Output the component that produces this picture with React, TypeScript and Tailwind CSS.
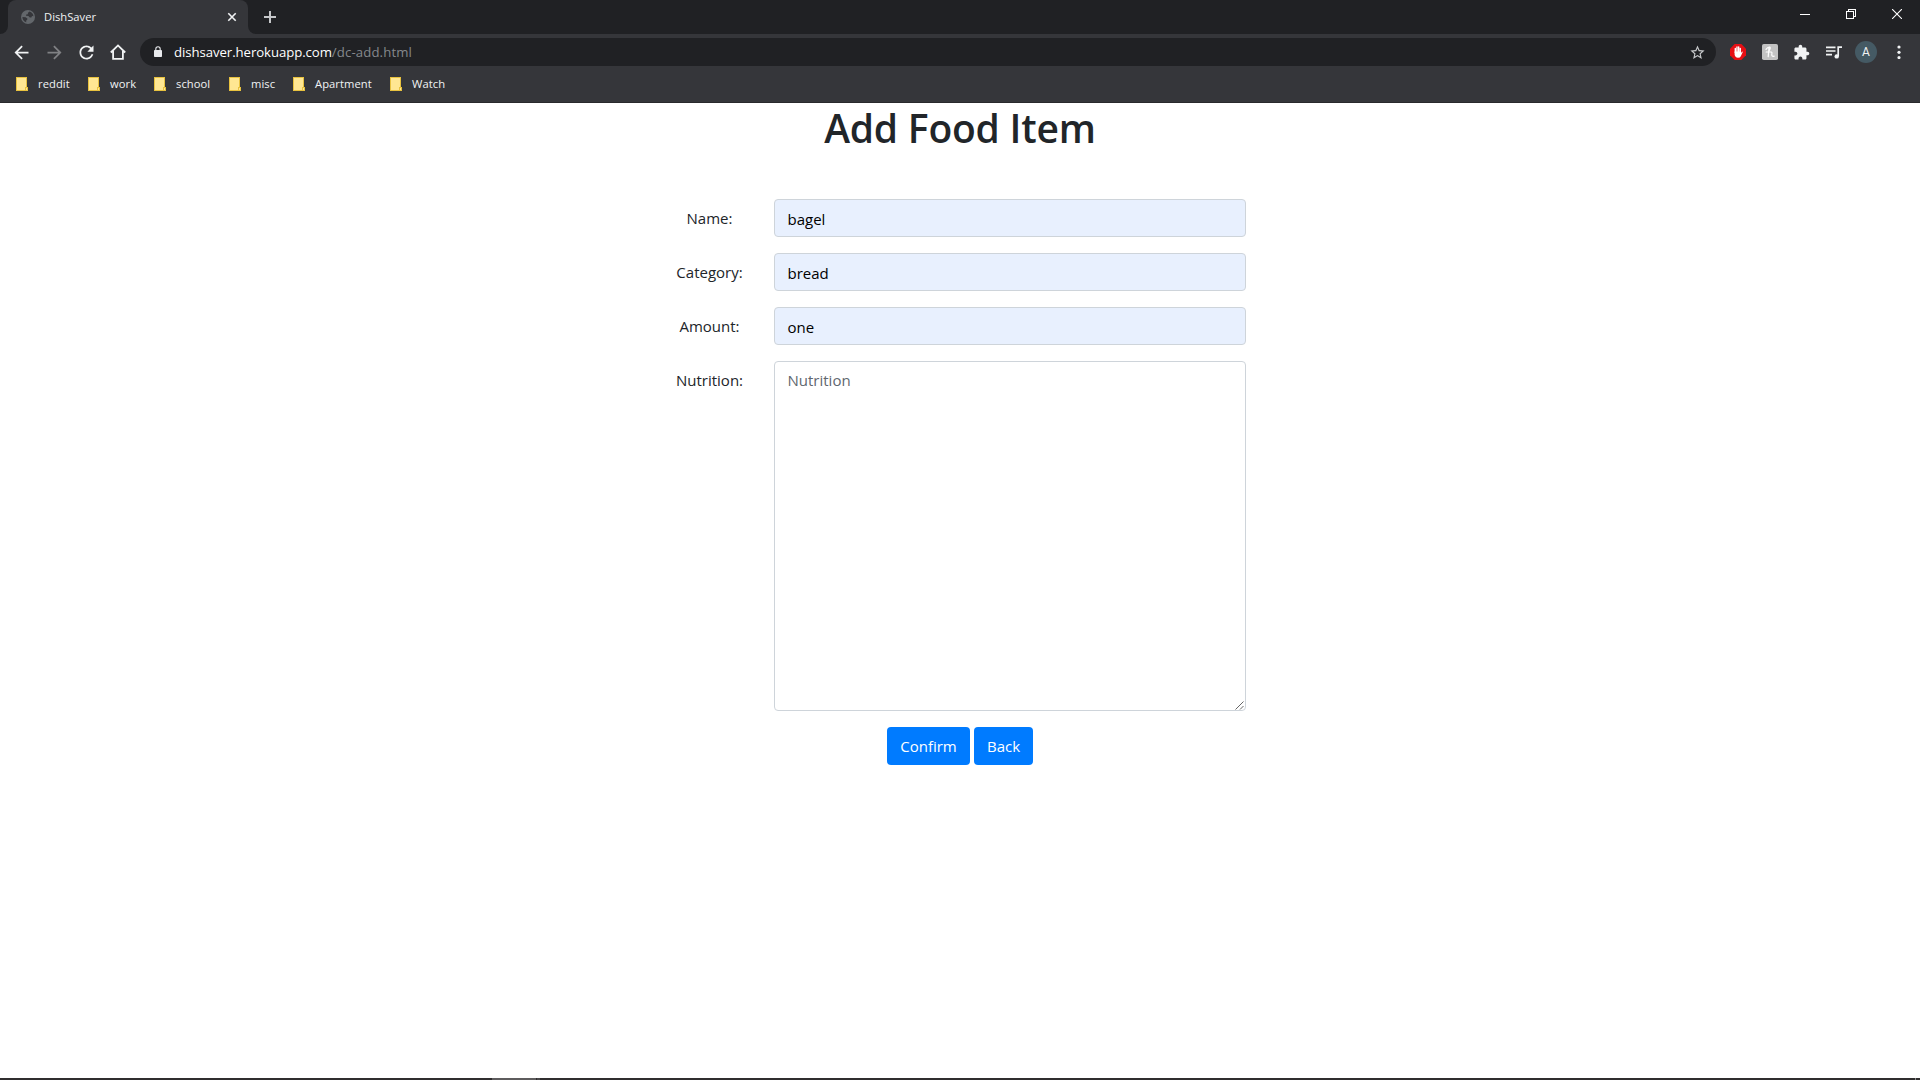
import React from "react";

const bookmarks = [
  { label: "reddit", width: "w-[72px]" },
  { label: "work", width: "w-[66px]" },
  { label: "school", width: "w-[75px]" },
  { label: "misc", width: "w-[64px]" },
  { label: "Apartment", width: "w-[97px]" },
  { label: "Watch", width: "w-[70px]" },
];

const fields = [
  { label: "Name:", value: "bagel" },
  { label: "Category:", value: "bread" },
  { label: "Amount:", value: "one" },
];

function Icon({ d, className }: { d: string; className: string }) {
  return (
    <svg viewBox="0 0 24 24" fill="currentColor" className={`shrink-0 ${className}`}>
      <path d={d} />
    </svg>
  );
}

function FolderIcon() {
  return (
    <svg viewBox="0 0 12 14" className="h-[14px] w-3 shrink-0">
      <path d="M0 0H11V10H12V14H0Z" fill="#e8c23f" />
      <path d="M1 1H10V10H9V13H1Z" fill="#ffe793" />
      <path d="M10 11H11V13H10Z" fill="#ffe793" />
    </svg>
  );
}

function TabStrip() {
  return (
    <div className="flex h-[34px] bg-[#202124]">
      <div className="flex w-2 items-end bg-[#35363a]">
        <div className="h-full w-full rounded-br-lg bg-[#202124]" />
      </div>
      <div className="flex h-full w-60 items-center rounded-t-lg bg-[#35363a] pl-[13px] pr-[11px]">
        <svg viewBox="0 0 14 14" className="h-[14px] w-[14px] shrink-0">
          <circle cx="7" cy="7" r="7" fill="#63676b" />
          <path d="M8.6 1.6 7 2.8 6.8 4.2 5.2 4.6 5 5.8 7.4 6 8.8 7.6 10.4 7.4 11 6 12.5 6.2A5.6 5.6 0 0 0 8.6 1.6ZM1.4 7 4.6 7.2 6.4 8.6 6.2 9.8 5.2 10.4 5.2 12.2A5.6 5.6 0 0 1 1.4 7Z" fill="#35363a" />
        </svg>
        <span className="mb-px ml-[9px] text-[11.2px] leading-4 tracking-[0.02px] text-[#f1f3f4]">DishSaver</span>
        <svg viewBox="0 0 10 10" className="ml-auto h-[10px] w-[10px] shrink-0" stroke="#f1f3f4" strokeWidth="1.6">
          <path d="M1.3 1.3 8.7 8.7M8.7 1.3 1.3 8.7" />
        </svg>
      </div>
      <div className="flex w-2 bg-[#35363a]">
        <div className="h-full w-full rounded-bl-lg bg-[#202124]" />
      </div>
      <svg viewBox="0 0 12 12" className="ml-2 mt-[11px] h-3 w-3" stroke="#c6c8ca" strokeWidth="2">
        <path d="M6 0V12M0 6H12" />
      </svg>
      <div className="ml-auto flex items-start pt-[9px] text-white">
        <svg viewBox="0 0 10 10" className="mr-9 h-[10px] w-[10px]" stroke="currentColor" shapeRendering="crispEdges">
          <path d="M0 5.5H10" />
        </svg>
        <svg viewBox="0 0 10 10" className="mr-9 h-[10px] w-[10px]" fill="none" stroke="currentColor" shapeRendering="crispEdges">
          <path d="M0.5 2.5H7.5V9.5H0.5ZM2.5 2.5V0.5H9.5V7.5H7.5" />
        </svg>
        <svg viewBox="0 0 10 10" className="mr-[18px] h-[10px] w-[10px]" stroke="currentColor" strokeWidth="1.1">
          <path d="M0 0 10 10M10 0 0 10" />
        </svg>
      </div>
    </div>
  );
}

function Toolbar() {
  return (
    <div className="flex h-9 items-center pl-[11px] text-[#f1f3f4]">
      <Icon className="h-[21px] w-[21px]" d="M20 11H7.83l5.59-5.59L12 4l-8 8 8 8 1.41-1.41L7.83 13H20v-2z" />
      <Icon className="ml-3 h-[21px] w-[21px] text-[#808184]" d="M12 4l-1.41 1.41L16.17 11H4v2h12.17l-5.58 5.59L12 20l8-8z" />
      <Icon className="ml-[11px] h-[21px] w-[21px]" d="M17.65 6.35C16.2 4.9 14.21 4 12 4c-4.42 0-7.99 3.58-7.99 8s3.57 8 7.99 8c3.73 0 6.84-2.55 7.73-6h-2.08c-.82 2.33-3.04 4-5.65 4-3.31 0-6-2.69-6-6s2.69-6 6-6c1.66 0 3.14.69 4.22 1.78L13 11h7V4l-2.35 2.35z" />
      <svg viewBox="0 0 16 16" className="ml-[13px] h-4 w-4 shrink-0" fill="none" stroke="currentColor" strokeWidth="1.8">
        <path d="M0.8 8.5 8 1.4 15.2 8.5M3.1 7V14.9H12.9V7" />
      </svg>
      <div className="ml-[14px] flex h-7 w-[1576px] items-center rounded-full bg-[#202124] pl-[14px] pr-[10px]">
        <svg viewBox="0 0 8 11" className="mb-px h-[11px] w-2 shrink-0">
          <path d="M1.8 5V3A2.2 2.2 0 0 1 6.2 3V5" fill="none" stroke="#e8eaed" strokeWidth="1.1" />
          <rect y="4" width="8" height="7" rx="0.8" fill="#e8eaed" />
        </svg>
        <span className="ml-3 text-[13.2px] leading-5 text-white">
          <span className="tracking-[-0.07px]">dishsaver.herokuapp.com</span>
          <span className="tracking-[0.12px] text-[#85888c]">/dc-add.html</span>
        </span>
        <Icon
          className="ml-auto h-[17px] w-[17px] text-[#c8cacc]"
          d="M22 9.24l-7.19-.62L12 2 9.19 8.63 2 9.24l5.46 4.73L5.82 21 12 17.27 18.18 21l-1.63-7.03L22 9.24zM12 15.4l-3.76 2.27 1-4.28-3.32-2.88 4.38-.38L12 6.1l1.71 4.04 4.38.38-3.32 2.88 1 4.28L12 15.4z"
        />
      </div>
      <svg viewBox="0 0 16 16" className="ml-[14px] h-4 w-4 shrink-0">
        <path d="M4.7 0H11.3L16 4.7V11.3L11.3 16H4.7L0 11.3V4.7Z" fill="#e60f14" />
        <path d="M5.3 8.6V4.4M7 8V3M8.7 8V3M10.3 8.5V4.4" stroke="white" strokeWidth="1.4" strokeLinecap="round" />
        <path d="M4.6 7.5H11V9L11.8 7.8Q12.7 7.2 12.8 7.9L10.8 12.2Q10.2 13.7 8 13.7Q4.9 13.6 4.6 10.5Z" fill="white" />
      </svg>
      <svg viewBox="0 0 16 16" className="ml-4 h-4 w-4 shrink-0">
        <rect width="16" height="16" rx="1.8" fill="#c3c3c3" />
        <path d="M4 5.4Q5.6 2.8 8 3.2Q9 4.4 6.4 7.8M7 3.6 6.2 12.6M4.2 8H9.4Q10.4 8.4 9.8 10.4Q9.4 12.8 12.2 12.2" fill="none" stroke="white" strokeWidth="1.2" strokeLinecap="round" />
      </svg>
      <Icon className="ml-[15px] h-[17px] w-[17px]" d="M20.5 11H19V7c0-1.1-.9-2-2-2h-4V3.5C13 2.12 11.88 1 10.5 1S8 2.12 8 3.5V5H4c-1.1 0-1.99.9-1.99 2v3.8H3.5c1.49 0 2.7 1.21 2.7 2.7s-1.21 2.7-2.7 2.7H2V20c0 1.1.9 2 2 2h3.8v-1.5c0-1.49 1.21-2.7 2.7-2.7 1.49 0 2.7 1.21 2.7 2.7V22H17c1.1 0 2-.9 2-2v-4h1.5c1.38 0 2.5-1.12 2.5-2.5S21.88 11 20.5 11z" />
      <svg viewBox="0 0 16 13" className="ml-4 h-[13px] w-4 shrink-0" fill="none" stroke="currentColor" strokeWidth="1.7">
        <path d="M0 1.3H9.5M0 5H9.5M0 8.7H6M12.2 10.2V1.1H16" />
        <circle cx="10.7" cy="10.4" r="2.2" fill="currentColor" stroke="none" />
      </svg>
      <div className="ml-[13px] flex h-[22px] w-[22px] items-center justify-center rounded-full bg-[#455a64] font-['Roboto',sans-serif] text-[12px] leading-none">A</div>
      <svg viewBox="0 0 4 14" className="ml-[19.5px] h-[14px] w-1" fill="currentColor">
        <circle cx="2" cy="2" r="1.6" />
        <circle cx="2" cy="7.3" r="1.6" />
        <circle cx="2" cy="12.6" r="1.6" />
      </svg>
    </div>
  );
}

export default function App() {
  return (
    <div className="flex h-screen flex-col overflow-hidden bg-white font-['Open_Sans',sans-serif]">
      <header className="flex h-[103px] flex-col border-b border-[#29292c] bg-[#35363a]">
        <TabStrip />
        <Toolbar />
        <nav className="flex h-7 items-center pl-4">
          {bookmarks.map((b) => (
            <a key={b.label} className={`flex items-center ${b.width}`}>
              <FolderIcon />
              <span className="ml-[10px] whitespace-nowrap text-[11.2px] leading-4 tracking-[0.06px] text-[#f1f3f4]">{b.label}</span>
            </a>
          ))}
        </nav>
      </header>

      <main className="flex-1 text-[15px] leading-6 text-[#212529]">
        <h1 className="h-12 text-center text-[39px] font-[560] leading-[50px] tracking-[-0.2px]">Add Food Item</h1>
        <form className="ml-[645px] mt-12 flex flex-col gap-4">
          {fields.map((f) => (
            <div key={f.label} className="flex h-[38px]">
              <label className="w-[129px] pt-[7px] text-center">{f.label}</label>
              <div className="w-[472px] rounded border border-[#ced4da] bg-[#e8f0fe] pl-[12.5px] pt-[7px] text-black">{f.value}</div>
            </div>
          ))}
          <div className="flex h-[350px]">
            <label className="w-[129px] pt-[7px] text-center">Nutrition:</label>
            <div className="flex w-[472px] items-start justify-between rounded border border-[#ced4da] pl-[12.5px] pt-[6px] text-[#5f676f]">
              <span>Nutrition</span>
              <svg viewBox="0 0 9 9" className="mr-px h-[9px] w-[9px] self-end" stroke="#555555" strokeWidth="0.9">
                <path d="M0.5 8.5 8.5 0.5M5 8.5 8.5 5" />
              </svg>
            </div>
          </div>
        </form>
        <div className="mt-4 flex justify-center gap-1 text-white">
          <button type="button" className="h-[38px] w-[83px] rounded bg-[#007bff]">Confirm</button>
          <button type="button" className="h-[38px] w-[59px] rounded bg-[#007bff]">Back</button>
        </div>
      </main>

      <footer className="flex h-[2px] bg-[#302e2f]">
        <div className="ml-[492px] w-11 bg-[#5e5c5d]" />
        <div className="ml-px w-[3px] bg-[#4a4849]" />
        <div className="ml-auto mr-1 w-px bg-[#8a8a8a]" />
      </footer>
    </div>
  );
}
